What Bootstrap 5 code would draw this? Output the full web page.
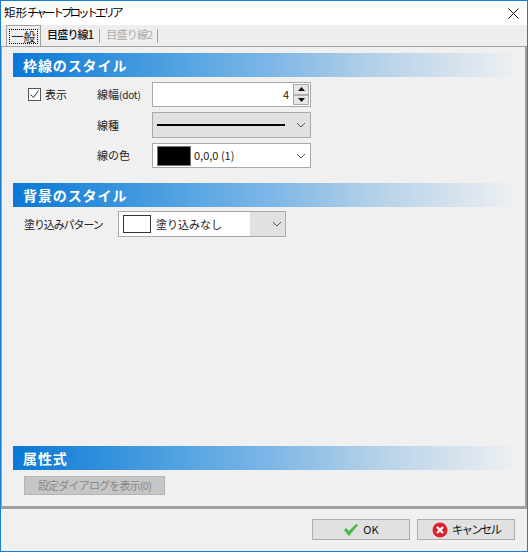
<!DOCTYPE html>
<html lang="ja">
<head>
<meta charset="utf-8">
<title>矩形チャートプロットエリア</title>
<link href="https://cdn.jsdelivr.net/npm/bootstrap@5.3.0/dist/css/bootstrap.min.css" rel="stylesheet">
<style>
html,body{margin:0;height:100%;background:#f0f0f0}
body{font-family:"Noto Sans CJK JP","Liberation Sans",sans-serif;font-size:11px;line-height:1;color:#222}
.win{width:528px;height:552px;border:1px solid #1a7fd0;background:#f0f0f0;overflow:hidden}
.tbar{height:24px;background:#fff;padding-left:3px;font-size:11.5px;color:#000}
.tbar svg{margin-right:8px}
.tkana{letter-spacing:-3px}
.tabstrip{height:21px;padding-left:5px;background:#eee}
.tab-a{width:35px;height:21px;border:1px solid #a0a0a0;border-bottom:0;background:#f0f0f0;position:relative;z-index:1;margin-bottom:-1px}
.tab-a span{border:1px dotted #000;padding:0 1px;line-height:13px;font-size:12px}
.tab-b{height:14px;padding:0 6px 0 6px;border-right:1px solid #a0a0a0;margin-top:4px;color:#111;font-weight:500;letter-spacing:-.8px;font-size:11px}
.tab-c{color:#aaa;font-weight:400;padding-left:6px;padding-right:5px}
.panel{height:463px;border:1px solid #a0a0a0;border-width:1px 2px 3px 1px;background:#f0f0f0;padding:6px 13px 0 11px}
.sec{height:24px;width:500px;background:linear-gradient(90deg,#0a78d6 0,#4b9fe0 30%,#7db7e6 52%,#b3d0e8 72%,#edeff1 100%);color:#fff;font-weight:700;font-size:14px;padding-left:10px;letter-spacing:.9px}
.fld{height:26px;border:1px solid #a9a9a9;background:#fff}
.lbl{width:55px}
.rows{padding-left:15px;padding-top:5px;height:106px}
.rowgap{gap:5px}
.chk{width:13px;height:13px;border:1px solid #555;background:#fff;margin-right:4px}
.w159{width:159px}
.spin{width:16px;margin:1px 1px 1px 0;border:1px solid #a9a9a9;background:#e6e6e6}
.spin i{display:flex;flex:1;align-items:center;justify-content:center}
.spin i+i{border-top:2px solid #b0b0b0}
.swatch{width:34px;height:20px;background:#000;border:1px solid #777;margin:0 3px 0 4px}
.gr{background:#e1e1e1}
.fill{background:#fff;height:24px;width:131px;padding-left:4px}
.fill b{width:28px;height:18px;border:1px solid #333;background:#fff;margin-right:5px;display:block}
.pat{width:168px}
.kana{white-space:nowrap;width:94px;letter-spacing:-1.1px}
.dot{font-size:10px;letter-spacing:-.2px}
.spacer{height:209px}
.btn-off{width:141px;height:19px;background:#c6c6c6;border:1px solid #b5b5b5;color:#888;margin:6px 0 0 11px;letter-spacing:-.8px}
.foot{padding:10px 12px 0 0;height:40px}
.pb{width:98px;height:21px;background:#e1e1e1;border:1px solid #adadad;color:#111}
.cx{letter-spacing:-1.8px;font-size:11.5px}
</style>
</head>
<body>
<div class="win d-flex flex-column">
  <div class="tbar d-flex align-items-center justify-content-between">
    <span>矩形<span class="tkana">チャートプロットエリア</span></span>
    <svg width="11" height="11" viewBox="0 0 11 11"><path d="M.5.5l10 10M10.5.5l-10 10" stroke="#111" fill="none"/></svg>
  </div>
  <div class="tabstrip d-flex align-items-start">
    <div class="tab-a d-flex align-items-center justify-content-center"><span>一般</span></div>
    <div class="tab-b">目盛り線1</div>
    <div class="tab-b tab-c">目盛り線2</div>
  </div>
  <div class="panel">
    <div class="sec d-flex align-items-center">枠線のスタイル</div>
    <div class="rows d-flex">
      <div class="d-flex align-items-center align-self-start" style="height:25px;width:69px">
        <span class="chk d-flex align-items-center justify-content-center"><svg width="11" height="11" viewBox="0 0 11 11"><path d="M1.5 5.5l3 3 5-7" stroke="#333" fill="none"/></svg></span>表示
      </div>
      <div class="d-flex flex-column rowgap">
        <div class="d-flex align-items-center">
          <span class="lbl">線幅<span class="dot">(dot)</span></span>
          <div class="fld w159 d-flex align-items-center justify-content-end" style="height:25px">
            <span class="me-1">4</span>
            <div class="spin d-flex flex-column align-self-stretch">
              <i><svg width="7" height="4" viewBox="0 0 7 4"><path d="M3.5 0L7 4H0z" fill="#111"/></svg></i>
              <i><svg width="7" height="4" viewBox="0 0 7 4"><path d="M0 0h7L3.5 4z" fill="#111"/></svg></i>
            </div>
          </div>
        </div>
        <div class="d-flex align-items-center">
          <span class="lbl">線種</span>
          <div class="fld gr w159 d-flex align-items-center justify-content-between px-1">
            <span style="display:block;width:128px;height:2px;background:#000"></span>
            <svg width="10" height="6" viewBox="0 0 10 6"><path d="M1 1l4 4 4-4" stroke="#555" fill="none"/></svg>
          </div>
        </div>
        <div class="d-flex align-items-center">
          <span class="lbl">線の色</span>
          <div class="fld w159 d-flex align-items-center" style="height:25px">
            <span class="swatch"></span><span>0,0,0 (1)</span>
            <svg class="ms-auto" style="margin-right:4px" width="10" height="6" viewBox="0 0 10 6"><path d="M1 1l4 4 4-4" stroke="#555" fill="none"/></svg>
          </div>
        </div>
      </div>
    </div>
    <div class="sec d-flex align-items-center">背景のスタイル</div>
    <div class="d-flex align-items-center" style="padding:4px 0 0 11px">
      <span class="kana">塗り込みパターン</span>
      <div class="fld gr pat d-flex align-items-center">
        <div class="fill d-flex align-items-center"><b></b>塗り込みなし</div>
        <svg class="ms-auto" style="margin-right:3px" width="10" height="6" viewBox="0 0 10 6"><path d="M1 1l4 4 4-4" stroke="#555" fill="none"/></svg>
      </div>
    </div>
    <div class="spacer"></div>
    <div class="sec d-flex align-items-center">属性式</div>
    <div class="btn-off d-flex align-items-center justify-content-center">設定ダイアログを表示(0)</div>
  </div>
  <div class="foot d-flex justify-content-end" style="gap:7px">
    <div class="pb d-flex align-items-center justify-content-center gap-1">
      <svg width="16" height="14" viewBox="0 0 16 14"><path d="M1 7l2-2 3 3 7-7 2 1-9 11z" fill="#4cb648" stroke="#8fd08c" stroke-width=".6"/></svg>OK
    </div>
    <div class="pb d-flex align-items-center justify-content-center gap-1">
      <svg width="16" height="16" viewBox="0 0 16 16"><circle cx="8" cy="8" r="7.5" fill="#e0202c"/><path d="M5 5l6 6M11 5l-6 6" stroke="#fff" stroke-width="2.4"/></svg><span class="cx">キャンセル</span>
    </div>
  </div>
</div>
</body>
</html>
